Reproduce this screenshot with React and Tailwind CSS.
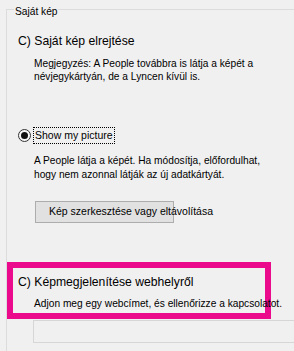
import React from 'react';

const ui = { fontFamily: '"Liberation Sans", Arial, sans-serif' };

function Radio({ checked }) {
  return (
    <span className="flex h-[13px] w-[13px] shrink-0 items-center justify-center rounded-full border border-[#333333] bg-[#f7f7f7]">
      {checked && <span className="h-[7px] w-[7px] rounded-full bg-[#111111]" />}
    </span>
  );
}

export default function App() {
  return (
    <div className="relative h-[351px] w-[294px] overflow-hidden bg-[#f0f0f0] text-black" style={ui}>
      {/* group box */}
      <div className="relative ml-[6px] mt-[9px] w-[320px] border border-[#dcdcdc] pb-[40px] pl-[11px]">
        <span className="absolute left-[7px] top-[-5px] bg-[#f0f0f0] px-[1px] text-[10.2px] leading-[13px]">Saját kép</span>

        <div className="mt-[23px] text-[12.2px] leading-[16px]">C) Saját kép elrejtése</div>
        <p className="mt-[8px] pl-[16px] text-[10.2px] leading-[13px]">
          Megjegyzés: A People továbbra is látja a képét a<br />
          névjegykártyán, de a Lyncen kívül is.
        </p>

        <div className="mt-[44px] flex h-[17px] items-center gap-[2px]">
          <Radio checked />
          <span className="border border-dotted border-black px-[1px] text-[10.5px] leading-[15px]">Show my picture</span>
        </div>
        <p className="mt-[10px] pl-[16px] text-[10.2px] leading-[14px]">
          A People látja a képét. Ha módosítja, előfordulhat,<br />
          hogy nem azonnal látják az új adatkártyát.
        </p>

        <button className="ml-[17px] mt-[19px] flex h-[22px] w-[139px] items-center overflow-visible whitespace-nowrap border border-[#adadad] bg-[#e1e1e1] pl-[13px] text-[10.5px]">
          Kép szerkesztése vagy eltávolítása
        </button>

        <div className="relative z-10 mt-[51px] text-[12.2px] leading-[16px]">C) Képmegjelenítése webhelyről</div>
        <p className="relative z-10 mt-[7px] whitespace-nowrap pl-[16px] text-[10.2px] leading-[13px]">
          Adjon meg egy webcímet, és ellenőrizze a kapcsolatot.
        </p>

        <div className="ml-[15px] mt-[10px] h-[23px] border border-[#d6d6d6] bg-[#f0f0f0]" />
      </div>

      {/* highlight */}
      <div className="absolute left-[7px] top-[262px] h-[57px] w-[264px] border-[6px] border-[#ec0a8c]" />
    </div>
  );
}
